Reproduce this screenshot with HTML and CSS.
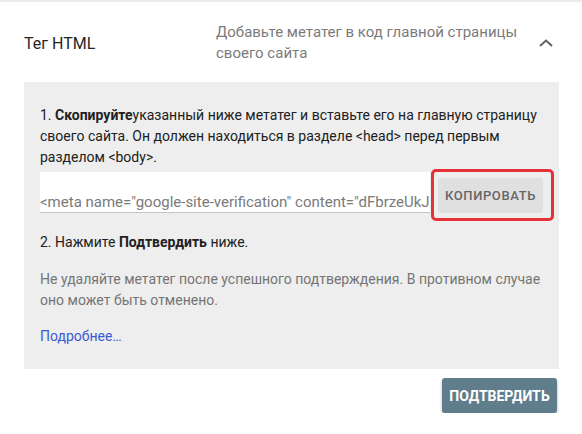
FILE: index.html
```html
<!DOCTYPE html>
<html lang="ru">
<head>
<meta charset="utf-8">
<link rel="stylesheet" href="styles.css">
</head>
<body>
<div class="divider"></div>
<div class="header">
  <div class="title">Тег HTML</div>
  <div class="desc">Добавьте метатег в код главной страницы своего сайта</div>
  <svg class="chevron" width="14" height="8" viewBox="0 0 14 8"><polyline points="1,7 7,1.5 13,7" fill="none" stroke="#616161" stroke-width="2"/></svg>
</div>
<div class="panel">
  <p class="step">1. <b>Скопируйте</b>указанный ниже метатег и вставьте его на главную страницу своего сайта. Он должен находиться в разделе &lt;head&gt; перед первым разделом &lt;body&gt;.</p>
  <div class="copy-row">
    <div class="field">&lt;meta name="google-site-verification" content="dFbrzeUkJ3xQ7pLmV0aR2sT9wYcN5hE8" /&gt;</div>
    <button class="copy-btn">Копировать</button>
  </div>
  <p class="step2">2. Нажмите <b>Подтвердить</b> ниже.</p>
  <p class="note">Не удаляйте метатег после успешного подтверждения. В противном случае оно может быть отменено.</p>
  <a class="more" href="#">Подробнее…</a>
</div>
<div class="actions">
  <button class="confirm">Подтвердить</button>
</div>
</body>
</html>
```
FILE: styles.css
```css
html, body {
  margin: 0;
  padding: 0;
  background: #ffffff;
  font-family: Roboto, "Noto Sans", sans-serif;
  color: #212121;
}
.divider {
  height: 2px;
  background: #ececec;
}
.header {
  display: flex;
  align-items: center;
  padding: 20px 29px 18px 24px;
}
.title {
  flex: 0 0 192px;
  font-size: 16px;
  color: #262626;
}
.desc {
  flex: 0 0 316px;
  font-size: 15px;
  line-height: 21px;
  color: #7b7b7b;
}
.chevron {
  margin-left: auto;
  display: block;
}
.panel {
  margin: 0 23px 0 24px;
  background: #eeeeee;
  padding: 23px 16px 22px 16px;
  font-size: 14px;
  line-height: 21px;
}
.panel p {
  margin: 0;
}
.step b, .step2 b {
  font-weight: 700;
}
.copy-row {
  display: flex;
  align-items: flex-end;
  margin-top: 4px;
}
.field {
  flex: 1;
  min-width: 0;
  background: #ffffff;
  border-bottom: 1px solid #c4c4c4;
  color: #7a7a7a;
  font-size: 15px;
  line-height: 20px;
  padding-top: 20px;
  box-sizing: border-box;
  height: 41px;
  white-space: nowrap;
  overflow: hidden;
}
.copy-btn {
  position: relative;
  flex: 0 0 105px;
  height: 35px;
  margin-left: 8px;
  border: none;
  border-radius: 2px;
  background: #e0e0e0;
  color: #666666;
  font-family: Roboto, sans-serif;
  font-size: 13px;
  font-weight: 500;
  letter-spacing: 0.6px;
  text-transform: uppercase;
  padding: 0;
}
.copy-btn::after {
  content: "";
  position: absolute;
  left: -7px;
  right: -11px;
  top: -9px;
  bottom: -8px;
  border: 3px solid #e53238;
  border-radius: 5px;
}
.step2 {
  margin-top: 19px !important;
}
.note {
  margin-top: 16px !important;
  color: #757575;
}
.more {
  display: block;
  margin-top: 15px;
  color: #3b5bd6;
  text-decoration: none;
}
.actions {
  display: flex;
  justify-content: flex-end;
  padding: 9px 25px 0 0;
}
.confirm {
  height: 35px;
  width: 115px;
  border: none;
  border-radius: 3px;
  background: #607d8b;
  color: #ffffff;
  font-family: Roboto, sans-serif;
  font-size: 14px;
  font-weight: 700;
  text-transform: uppercase;
  padding: 0;
  box-shadow: 0 2px 3px rgba(0,0,0,0.3);
}
```
